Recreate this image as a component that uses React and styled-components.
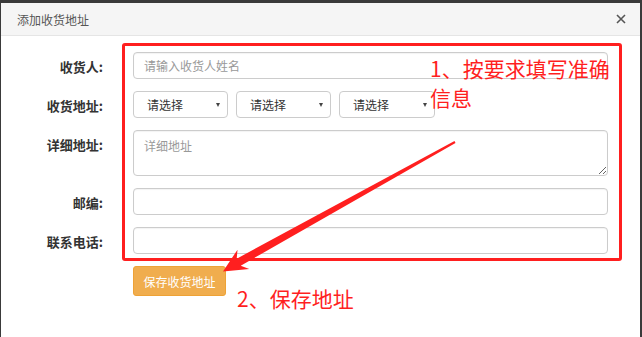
import React from 'react';
import styled, { createGlobalStyle } from 'styled-components';

const GlobalStyle = createGlobalStyle`
	html, body {
		margin: 0;
		padding: 0;
		background: #3a3a3a;
	}
	* {
		box-sizing: border-box;
	}
`;

const cjk = `"Noto Sans CJK SC", "Noto Sans", sans-serif`;

const Page = styled.div`
	position: relative;
	width: 642px;
	height: 337px;
	padding: 3px 2px 0 1px;
	overflow: hidden;
	font-family: ${cjk};
`;

const Modal = styled.div`
	height: 100%;
	background: #fff;
	display: flex;
	flex-direction: column;
`;

const Header = styled.div`
	height: 33px;
	background: #f5f5f5;
	border-bottom: 1px solid #e5e5e5;
	display: flex;
	align-items: center;
	justify-content: space-between;
	padding: 0 13px 0 16px;
`;

const Title = styled.span`
	font-size: 12px;
	color: #555;
`;

const Close = styled.button`
	border: none;
	background: none;
	padding: 0;
	width: 12px;
	height: 12px;
	display: flex;
	align-items: center;
	justify-content: center;
	cursor: pointer;
`;

const Body = styled.div`
	padding-top: 16px;
`;

const Form = styled.form`
	display: grid;
	grid-template-columns: 102px 475px;
	column-gap: 30px;
	row-gap: 12px;
	align-items: start;
`;

const Label = styled.label`
	height: 27px;
	padding-top: 2px;
	font-size: 13px;
	font-weight: bold;
	color: #333;
	text-align: right;
	line-height: 25px;
	white-space: nowrap;
`;

const Input = styled.input`
	width: 100%;
	height: 27px;
	border: 1px solid #ccc;
	border-radius: 4px;
	padding: 0 10px;
	font-family: ${cjk};
	font-size: 12px;
	color: #333;
	outline: none;
	box-shadow: inset 0 1px 1px rgba(0, 0, 0, 0.05);

	&::placeholder {
		color: #999;
	}
`;

const TextArea = styled.textarea`
	display: block;
	width: 100%;
	height: 46px;
	border: 1px solid #ccc;
	border-radius: 4px;
	padding: 6px 10px;
	font-family: ${cjk};
	font-size: 12px;
	line-height: 18px;
	color: #333;
	outline: none;
	resize: vertical;
	box-shadow: inset 0 1px 1px rgba(0, 0, 0, 0.05);

	&::placeholder {
		color: #999;
	}
`;

const SelectRow = styled.div`
	display: flex;
	gap: 8px;
`;

const Select = styled.div`
	position: relative;
	width: ${({ $w }) => $w || 95}px;
	height: 27px;
	border: 1px solid #ccc;
	border-radius: 4px;
	padding-left: 13px;
	font-size: 12px;
	line-height: 25px;
	color: #333;

	&::after {
		content: '';
		position: absolute;
		right: 7px;
		top: 11px;
		border-left: 2.5px solid transparent;
		border-right: 2.5px solid transparent;
		border-top: 4px solid #444;
	}
`;

const SaveButton = styled.button`
	width: 93px;
	height: 30px;
	background: #f0ad4e;
	border: 1px solid #eea236;
	border-radius: 3px;
	color: #fff;
	font-family: ${cjk};
	font-size: 12px;
	padding: 0;
	cursor: pointer;
`;

/* annotation layer drawn on top of the dialog */
const Frame = styled.div`
	position: absolute;
	left: 122px;
	top: 43px;
	width: 500px;
	height: 218px;
	border: 3px solid #ff1f1f;
	border-radius: 3px;
	pointer-events: none;
`;

const Note = styled.div`
	position: absolute;
	left: ${({ $x }) => $x}px;
	top: ${({ $y }) => $y}px;
	font-size: 21px;
	line-height: 29px;
	color: #ff1f1f;
	white-space: nowrap;
	pointer-events: none;
`;

const Arrow = styled.svg`
	position: absolute;
	left: 0;
	top: 0;
	pointer-events: none;
`;

function App() {
	return (
		<>
			<GlobalStyle />
			<Page>
				<Modal>
					<Header>
						<Title>添加收货地址</Title>
						<Close aria-label="close">
							<svg width="10" height="10" viewBox="0 0 10 10">
								<path d="M1 1L9 9M9 1L1 9" stroke="#555" strokeWidth="1.6" />
							</svg>
						</Close>
					</Header>
					<Body>
						<Form>
							<Label>收货人:</Label>
							<Input placeholder="请输入收货人姓名" />

							<Label>收货地址:</Label>
							<SelectRow>
								<Select>请选择</Select>
								<Select>请选择</Select>
								<Select $w={96}>请选择</Select>
							</SelectRow>

							<Label>详细地址:</Label>
							<TextArea placeholder="详细地址" />

							<Label>邮编:</Label>
							<Input />

							<Label>联系电话:</Label>
							<Input />

							<span />
							<SaveButton type="button">保存收货地址</SaveButton>
						</Form>
					</Body>
				</Modal>

				<Frame />
				<Note $x={430} $y={54}>1、按要求填写准确<br />信息</Note>
				<Note $x={237} $y={284}>2、保存地址</Note>
				<Arrow width="642" height="337" viewBox="0 0 642 337">
					<polygon
						fill="#ff1f1f"
						points="454.5,141 236.7,258.7 237.5,249.7 223,271.5 249.3,268.9 240.7,265.7 455.5,143"
					/>
				</Arrow>
			</Page>
		</>
	);
}

export default App;
